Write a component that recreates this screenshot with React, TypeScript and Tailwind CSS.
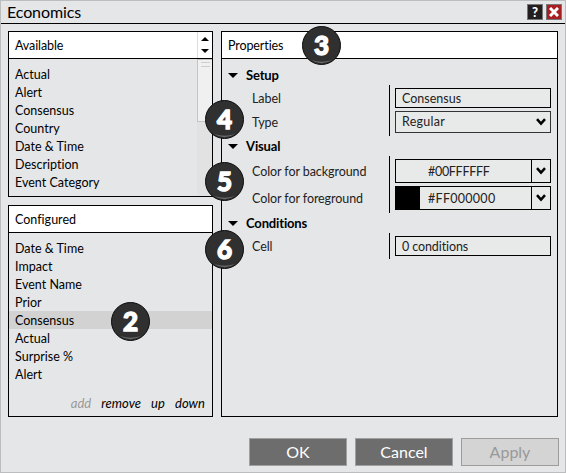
import { useState, type ReactNode } from 'react'
import clsx from 'clsx'

const available = ['Actual', 'Alert', 'Consensus', 'Country', 'Date & Time', 'Description', 'Event Category']
const configured = ['Date & Time', 'Impact', 'Event Name', 'Prior', 'Consensus', 'Actual', 'Surprise %', 'Alert']

function Chevron() {
  return (
    <svg width="10" height="8" viewBox="0 0 10 8" className="block">
      <path d="M1 1.2 L5 5.7 L9 1.2" fill="none" stroke="#000" strokeWidth="2.5" />
    </svg>
  )
}

interface BadgeProps {
  value: number
  className: string
}

function Badge({ value, className }: BadgeProps) {
  return (
    <div className={clsx('absolute w-[39px] h-[39px]', className)}>
      <svg width="39" height="39" viewBox="0 0 39 39" className="block">
        <circle cx="19.5" cy="19.5" r="19" fill="#303030" stroke="#0c0c0c" />
        <path d="M9 34 Q19.5 37.5 30 34 Q19.5 40.5 9 34Z" fill="#6b6b6b" />
        <text
          x="19.5"
          y="29"
          textAnchor="middle"
          className="font-['Lato',sans-serif] text-[26px] font-black"
          fill="#fff"
          stroke="#fff"
          strokeWidth="1.4"
        >
          {value}
        </text>
      </svg>
    </div>
  )
}

interface ListProps {
  items: string[]
  selected?: string
  onSelect?: (item: string) => void
}

function List({ items, selected, onSelect }: ListProps) {
  return (
    <ul className="pt-1.5 flex-1 text-[12.5px] tracking-[0.01px]">
      {items.map((item) => (
        <li
          key={item}
          onClick={() => onSelect?.(item)}
          className={clsx('h-[18px] pl-1.5 leading-5', item === selected && 'bg-[#d2d2d2]')}
        >
          {item}
        </li>
      ))}
    </ul>
  )
}

function GroupTitle({ children }: { children: ReactNode }) {
  return (
    <div className="flex items-center h-5 gap-2 font-bold text-[13px] leading-5 tracking-[-0.15px]">
      <svg width="10" height="5" viewBox="0 0 10 5">
        <path d="M0 0h10L5 5z" />
      </svg>
      {children}
    </div>
  )
}

interface GroupProps {
  labels: ReactNode
  children: ReactNode
}

function Group({ labels, children }: GroupProps) {
  return (
    <div className="flex text-[12.5px]">
      <div className="w-[161px] pl-[24px] flex flex-col pt-1 text-[#222] tracking-[-0.08px]">{labels}</div>
      <div className="flex-1 border-l border-black pl-[5px] py-[3px] flex flex-col text-[#222]">{children}</div>
    </div>
  )
}

export default function App() {
  const [selected, setSelected] = useState('Consensus')

  return (
    <div className="relative w-[566px] h-[473px] bg-[#e5e6e8] border border-[#bcbdbf] font-['Lato',sans-serif] text-[13px] text-black flex flex-col overflow-hidden">
      <header className="h-[23px] shrink-0 border-b border-black flex items-center justify-between pl-1.5 pr-[3px]">
        <h1 className="text-[16px] leading-5 tracking-[-0.1px]">Economics</h1>
        <div className="flex gap-[3px]">
          <button className="w-4 h-4 bg-[#231f20] border border-[#777] text-white text-[13px] leading-[14px] font-black">?</button>
          <button className="w-4 h-4 bg-[#a91e23] border border-[#777] flex items-center justify-center">
            <svg width="10" height="10" viewBox="0 0 10 10">
              <path d="M1 1L9 9M9 1L1 9" stroke="#fff" strokeWidth="3" />
            </svg>
          </button>
        </div>
      </header>

      <main className="flex gap-2 pl-[7px] pr-[7px] pt-[7px] h-[393px] shrink-0">
        <div className="w-[205px] flex flex-col gap-2">
          <section className="h-[166px] border border-black flex flex-col">
            <div className="h-[27px] shrink-0 bg-white border-b border-black flex">
              <h2 className="flex-1 pl-1.5 leading-[27px] text-[12.5px] tracking-[-0.1px]">Available</h2>
              <div className="w-[15px] border-l border-[#ddd] flex flex-col items-center justify-between py-[5px]">
                <svg width="8" height="4" viewBox="0 0 8 4"><path d="M0 4h8L4 0z" /></svg>
                <svg width="8" height="4" viewBox="0 0 8 4"><path d="M0 0h8L4 4z" /></svg>
              </div>
            </div>
            <div className="flex flex-1 min-h-0">
              <List items={available} />
              <div className="w-[15px] bg-[#e2e2e2]">
                <div className="h-[63px] bg-[#f0f0f0] border border-r-0 border-[#c4c4c4] flex flex-col items-center gap-[3px] pt-[2px]">
                  <div className="w-[9px] h-px bg-[#ccc]" />
                  <div className="w-[9px] h-px bg-[#ccc]" />
                </div>
              </div>
            </div>
          </section>

          <section className="h-[212px] border border-black flex flex-col">
            <h2 className="h-[27px] shrink-0 bg-white border-b border-black pl-1.5 leading-[27px] text-[12.5px] tracking-[0.01px]">Configured</h2>
            <List items={configured} selected={selected} onSelect={setSelected} />
            <div className="flex justify-end gap-[10px] pr-[7px] pb-[3px] h-[23px] leading-[20px] italic tracking-[0.05px]">
              <span className="text-[#999]">add</span>
              <span>remove</span>
              <span>up</span>
              <span>down</span>
            </div>
          </section>
        </div>

        <section className="flex-1 h-[386px] border border-black">
          <h2 className="h-[27px] bg-white border-b border-black pl-1.5 leading-[27px] text-[12.5px] tracking-[-0.1px]">Properties</h2>
          <div className="pl-1.5 pr-1.5 pt-[6px]">
            <GroupTitle>Setup</GroupTitle>
            <Group
              labels={
                <>
                  <span className="h-6 leading-5">Label</span>
                  <span className="leading-5">Type</span>
                </>
              }
            >
              <div className="h-5 border border-black bg-[#e8e9e9] pl-1.5 leading-5">Consensus</div>
              <div className="h-[22px] mt-[3px] border border-[#333] bg-[#e8e9e9] pl-1.5 pr-1 leading-5 flex items-center justify-between tracking-[0.25px]">
                Regular
                <Chevron />
              </div>
            </Group>

            <GroupTitle>Visual</GroupTitle>
            <Group
              labels={
                <>
                  <span className="h-[27px] leading-6">Color for background</span>
                  <span className="leading-6">Color for foreground</span>
                </>
              }
            >
              {[
                { value: '#00FFFFFF', swatch: 'bg-transparent', tracking: 'tracking-[-0.3px]' },
                { value: '#FF000000', swatch: 'bg-black', tracking: 'tracking-[0.28px]' },
              ].map(({ value, swatch, tracking }) => (
                <div key={value} className="h-6 border border-black bg-[#e8e9e9] leading-6 flex mb-[3px] last:mb-0">
                  <div className={clsx('w-6', swatch)} />
                  <span className={clsx('flex-1 pl-2', tracking)}>{value}</span>
                  <div className="w-[19px] border-l border-black flex items-center justify-center">
                    <Chevron />
                  </div>
                </div>
              ))}
            </Group>

            <GroupTitle>Conditions</GroupTitle>
            <Group labels={<span className="leading-5">Cell</span>}>
              <div className="h-5 border border-black bg-[#e8e9e9] pl-1.5 leading-5 tracking-[-0.1px]">0 conditions</div>
            </Group>
          </div>
        </section>
      </main>

      <footer className="flex justify-end gap-2 pr-1.5 pt-[21px] text-[16px]">
        <button className="w-[98px] h-7 bg-[#6d6d6d] border border-[#a0a0a0] text-white">OK</button>
        <button className="w-[98px] h-7 bg-[#6d6d6d] border border-[#a0a0a0] text-white">Cancel</button>
        <button className="w-[98px] h-7 bg-[#d4d4d4] border border-[#9c9c9c] text-[#999]" disabled>Apply</button>
      </footer>

      <Badge value={2} className="left-[110px] top-[301px]" />
      <Badge value={3} className="left-[301px] top-[25px]" />
      <Badge value={4} className="left-[204px] top-[99px]" />
      <Badge value={5} className="left-[204px] top-[161px]" />
      <Badge value={6} className="left-[204px] top-[229px]" />
    </div>
  )
}
